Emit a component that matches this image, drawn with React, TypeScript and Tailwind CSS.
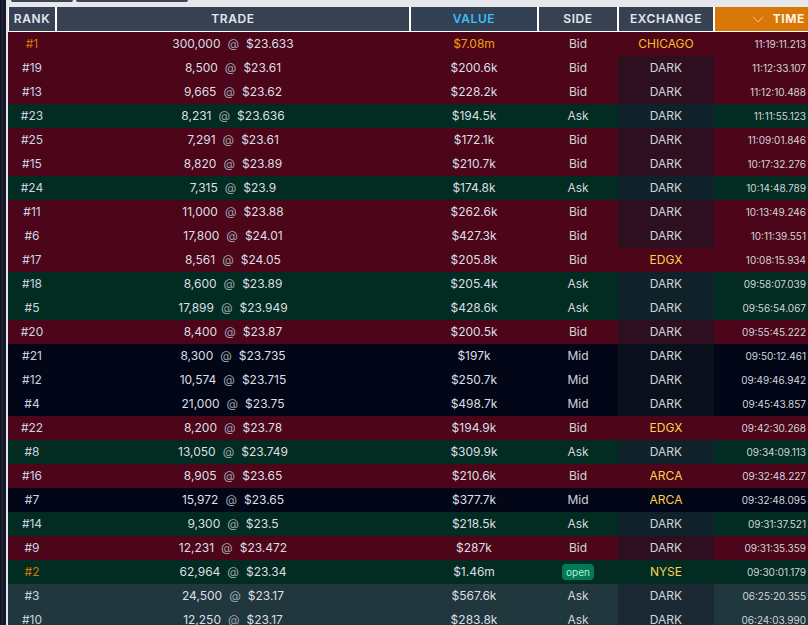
const rows: [string, string, string, string, string, string, string, string][] = [
  ["#1", "300,000", "$23.633", "$7.08m", "Bid", "CHICAGO", "11:19:11.213", "b"],
  ["#19", "8,500", "$23.61", "$200.6k", "Bid", "DARK", "11:12:33.107", "b"],
  ["#13", "9,665", "$23.62", "$228.2k", "Bid", "DARK", "11:12:10.488", "b"],
  ["#23", "8,231", "$23.636", "$194.5k", "Ask", "DARK", "11:11:55.123", "a"],
  ["#25", "7,291", "$23.61", "$172.1k", "Bid", "DARK", "11:09:01.846", "b"],
  ["#15", "8,820", "$23.89", "$210.7k", "Bid", "DARK", "10:17:32.276", "b"],
  ["#24", "7,315", "$23.9", "$174.8k", "Ask", "DARK", "10:14:48.789", "a"],
  ["#11", "11,000", "$23.88", "$262.6k", "Bid", "DARK", "10:13:49.246", "b"],
  ["#6", "17,800", "$24.01", "$427.3k", "Bid", "DARK", "10:11:39.551", "b"],
  ["#17", "8,561", "$24.05", "$205.8k", "Bid", "EDGX", "10:08:15.934", "b"],
  ["#18", "8,600", "$23.89", "$205.4k", "Ask", "DARK", "09:58:07.039", "a"],
  ["#5", "17,899", "$23.949", "$428.6k", "Ask", "DARK", "09:56:54.067", "a"],
  ["#20", "8,400", "$23.87", "$200.5k", "Bid", "DARK", "09:55:45.222", "b"],
  ["#21", "8,300", "$23.735", "$197k", "Mid", "DARK", "09:50:12.461", "m"],
  ["#12", "10,574", "$23.715", "$250.7k", "Mid", "DARK", "09:49:46.942", "m"],
  ["#4", "21,000", "$23.75", "$498.7k", "Mid", "DARK", "09:45:43.857", "m"],
  ["#22", "8,200", "$23.78", "$194.9k", "Bid", "EDGX", "09:42:30.268", "b"],
  ["#8", "13,050", "$23.749", "$309.9k", "Ask", "DARK", "09:34:09.113", "a"],
  ["#16", "8,905", "$23.65", "$210.6k", "Bid", "ARCA", "09:32:48.227", "b"],
  ["#7", "15,972", "$23.65", "$377.7k", "Mid", "ARCA", "09:32:48.095", "m"],
  ["#14", "9,300", "$23.5", "$218.5k", "Ask", "DARK", "09:31:37.521", "a"],
  ["#9", "12,231", "$23.472", "$287k", "Bid", "DARK", "09:31:35.359", "b"],
  ["#2", "62,964", "$23.34", "$1.46m", "open", "NYSE", "09:30:01.179", "a"],
  ["#3", "24,500", "$23.17", "$567.6k", "Ask", "DARK", "06:25:20.355", "p"],
  ["#10", "12,250", "$23.17", "$283.8k", "Ask", "DARK", "06:24:03.990", "p"],
];

const bg: Record<string, string> = {
  b: "bg-[#4c0519]",
  a: "bg-[#022c22]",
  m: "bg-[#020617]",
  p: "bg-[#20373d]",
};
const dark: Record<string, string> = {
  b: "bg-[#2d0f20]",
  a: "bg-[#0f2229]",
  m: "bg-[#0a111d]",
  p: "bg-[#1a2933]",
};
const cols = "grid grid-cols-[48px_354px_128px_80px_96px_94px]";

export default function App() {
  return (
    <div className="w-[808px] h-[625px] overflow-hidden bg-[#e5e7eb] flex font-['Inter',sans-serif] text-[12px]">
      <div className="w-[8px] shrink-0 flex">
        <div className="w-[6px] bg-[#1e2235] border-l border-l-[#10131f] border-r-[3px] border-r-[#141828]" />
      </div>
      <div className="w-[800px] shrink-0 flex flex-col">
        <div className="h-[7px] shrink-0 flex gap-[3px] pl-[3px] items-start">
          <div className="w-[62px] h-[2px] bg-[#3a4556] rounded-b" />
          <div className="w-[112px] h-[2px] bg-[#3a4556] rounded-b" />
        </div>
        <div className={`${cols} h-[25px] border-b border-b-white shrink-0 font-semibold text-[12px] tracking-[0.05em] text-[#e2e8f0]`}>
          <div className="bg-[#374151] border-x border-x-white flex items-center justify-center">RANK</div>
          <div className="bg-[#374151] border-x border-x-white flex items-center justify-center">TRADE</div>
          <div className="bg-[#334155] border-x border-x-white flex items-center justify-center text-[#38bdf8]">VALUE</div>
          <div className="bg-[#374151] border-x border-x-white flex items-center justify-center">SIDE</div>
          <div className="bg-[#374151] border-x border-x-white flex items-center justify-center">EXCHANGE</div>
          <div className="bg-[#d97706] border-l border-l-white flex items-center justify-end pr-[3px] text-[#fef3e2] gap-[9px]">
            <svg width="12" height="7" viewBox="0 0 12 7" fill="none" stroke="#f3c58c" strokeWidth="1">
              <path d="M1 0.8 L6 6 L11 0.8" />
            </svg>
            <span className="font-bold">TIME</span>
          </div>
        </div>
        {rows.map((r) => {
          const gold = r[0] === "#1" || r[0] === "#2";
          return (
            <div
              key={r[0]}
              className={`${cols} h-[24px] shrink-0 items-stretch text-[#d1d5db] ${bg[r[7]]}`}
            >
              <div className={`flex items-center justify-center ${gold ? "text-[#d97706]" : "text-[#cbd5e1]"}`}>{r[0]}</div>
              <div className="flex items-center justify-center text-[#dcdfe4]">
                <span>{r[1]}</span>
                <span className="mx-[7px] text-[#9ca3af]">@</span>
                <span>{r[2]}</span>
              </div>
              <div className={`flex items-center justify-center ${r[0] === "#1" ? "text-[#f59e0b]" : "text-[#dcdfe4]"}`}>{r[3]}</div>
              <div className="flex items-center justify-center">
                {r[4] === "open" ? (
                  <span className="bg-[#047857] text-[#a7f3d0] rounded-[4px] text-[10px] px-[4px] h-[16px] leading-[16px]">open</span>
                ) : (
                  r[4]
                )}
              </div>
              <div
                className={`flex items-center justify-center ${r[5] === "DARK" ? `${dark[r[7]]} text-[#d1d5db]` : r[5] === "CHICAGO" ? "text-[#fbbf24]" : "text-[#fcd34d]"}`}
              >
                {r[5]}
              </div>
              <div className="flex items-center justify-end pr-[2px] text-[10px] text-[#d1d5db]">{r[6]}</div>
            </div>
          );
        })}
      </div>
    </div>
  );
}
